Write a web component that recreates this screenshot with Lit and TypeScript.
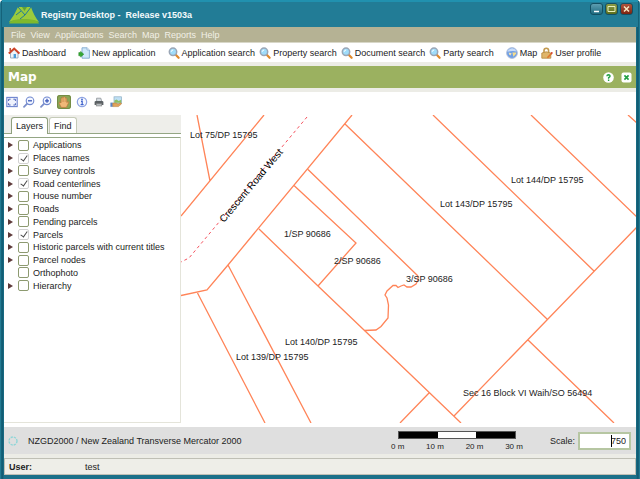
import { LitElement, html, svg, css, TemplateResult } from "lit";
import { customElement, property, state } from "lit/decorators.js";
import { classMap } from "lit/directives/class-map.js";

const magnifier = svg`
  <path d="M7.5 7.5 L10.6 10.8" stroke="#e08a2c" stroke-width="2.2" stroke-linecap="round"/>
  <circle cx="5" cy="4.8" r="3.7" fill="#9fdcfa" stroke="#9aa6b6" stroke-width="1.5"/>
  <path d="M3.2 4.8 A2 2 0 0 1 5.2 3" stroke="#fff" fill="none"/>`;

const icons: Record<string, TemplateResult> = {
  home: svg`
    <path d="M2.5 6 V11 H10 V6 L6.2 2.5 Z" fill="#eef3f8" stroke="#8ba0b8" stroke-width=".8"/>
    <path d="M.8 6.6 L6.2 1.6 L11.4 6.6" fill="none" stroke="#cf4327" stroke-width="2"/>
    <path d="M2.2 1 V4" stroke="#b5442c" stroke-width="1.4"/>
    <rect x="5.6" y="7" width="2.4" height="4" fill="#4a9bd8"/>`,
  create: svg`
    <path d="M4 .8 H9 L11.4 3 V11.2 H4 Z" fill="#cfe8fa" stroke="#7fa8cf" stroke-width=".9"/>
    <path d="M9 .8 V3 H11.4" fill="#fff" stroke="#7fa8cf" stroke-width=".7"/>
    <path d="M.8 5.6 H2.6 V4.4 L5.8 7.2 L2.6 10 V8.8 H.8 Z" fill="#35a835" stroke="#1f8420" stroke-width=".5"/>`,
  search: magnifier,
  globe: svg`
    <circle cx="6" cy="6" r="5.4" fill="#6f9fe6" stroke="#b3bfd8" stroke-width=".9"/>
    <path d="M1.4 5 Q3 .8 6.4 1.2 Q9.4 1.4 10.6 4.4 Q6 3.2 1.4 5Z" fill="#c9dcf8"/>
    <path d="M2.6 5.4 L5.6 6.2 L4.4 8.6 Q2.8 7.6 2.6 5.400Z" fill="#f1e3b4"/>
    <path d="M6.4 5.600 H10.200 Q10.600 7 8.800 8.200 L7.400 9.800Z" fill="#f6dc8a"/>`,
  user: svg`
    <path d="M3 6 V3.6 A2.3 2.3 0 0 1 7.6 3.6 V6" fill="none" stroke="#c39a50" stroke-width="1.6"/>
    <path d="M.8 6 L5.2 4.8 L9.8 6 V11.2 H.8Z" fill="#dfb56a" stroke="#b5883c" stroke-width=".8"/>
    <path d="M6.4 10.8 L10.6 6.4" stroke="#e0742e" stroke-width="1.6"/>
    <circle cx="10.800" cy="6" r=".9" fill="#d33b2a"/>`,
  extent: svg`
    <rect x=".8" y="1.4" width="10.4" height="9.2" fill="#eef2fd" stroke="#6d84cf" stroke-width="1.1"/>
    <path d="M2.6 5 V3.2 H4.6 M7.4 3.2 H9.4 V5 M9.4 7.2 V9 H7.4 M4.6 9 H2.6 V7.2" fill="none" stroke="#5067bd" stroke-width="1"/>`,
  zoomOut: svg`
    <path d="M4.4 7.4 L1 10.8" stroke="#7c8fca" stroke-width="1.8" stroke-linecap="round"/>
    <circle cx="7" cy="4.8" r="3.8" fill="#f2f6ff" stroke="#7088cf" stroke-width="1.1"/>
    <path d="M5 4.8 H9" stroke="#3c58b8" stroke-width="1.3"/>`,
  zoomIn: svg`
    <path d="M4.4 7.4 L1 10.8" stroke="#7c8fca" stroke-width="1.8" stroke-linecap="round"/>
    <circle cx="7" cy="4.8" r="3.8" fill="#f2f6ff" stroke="#7088cf" stroke-width="1.1"/>
    <path d="M5 4.8 H9 M7 2.8 V6.8" stroke="#3c58b8" stroke-width="1.3"/>`,
  hand: svg`
    <path d="M3.2 11.4 L1.2 7.4 Q.8 6 2 6.2 L3 7 V2.4 Q3.5 1.5 4.2 2.4 V1.4 Q5 .5 5.7 1.4 V1.2 Q6.5 .4 7.3 1.4 V2.2 Q8.2 1.6 8.8 2.6 V6.6 L10 5.6 Q11.2 5.6 10.6 6.8 L8.4 11.4Z" fill="#f0b878" stroke="#b9743a" stroke-width=".7"/>
    <path d="M4.2 2.6 V6 M5.7 2 V6 M7.3 2.4 V6" stroke="#c98848" stroke-width=".6"/>`,
  info: svg`
    <circle cx="6" cy="6" r="4.7" fill="#f4f7ff" stroke="#8fa4e2" stroke-width="1.2"/>
    <circle cx="6" cy="3.500" r=".9" fill="#3f62cc"/>
    <path d="M5 5.4 H6.2 V8.4 M4.6 8.6 H7.6" fill="none" stroke="#3f62cc" stroke-width="1.200"/>`,
  print: svg`
    <path d="M3.6 5 V2.2 H7.8 L8.6 5" fill="#d7dde2" stroke="#8a9096" stroke-width=".8"/>
    <path d="M1.6 6 Q1.6 5 3 5 H9 Q10.4 5 10.4 6 V9 H1.6Z" fill="#5a6064"/>
    <rect x="3.2" y="7.6" width="5.6" height="2.400" fill="#b6bcc0" stroke="#777" stroke-width=".5"/>`,
  publish: svg`
    <rect x="4" y=".8" width="7.6" height="6.4" fill="#bfe0f5" stroke="#8fb0c4" stroke-width=".7"/>
    <path d="M4.4 6.8 V4.6 L6.6 3.4 L8.6 5 L11.2 3.8 V6.8Z" fill="#8cc063"/>
    <rect x=".4" y="6.6" width="2.4" height="4.2" fill="#5b84c4"/>
    <path d="M2.8 7 H6 L8 8 L11 6.8 Q12 7.2 11.2 8.2 L8.4 10.6 H2.8Z" fill="#e0a35c" stroke="#b57632" stroke-width=".5"/>`,
};

const glyph = (name: string) =>
  html`<svg class="icon" viewBox="0 0 12 12" aria-hidden="true">${icons[name]}</svg>`;

const menus = ["File", "View", "Applications", "Search", "Map", "Reports", "Help"];

const shortcuts = [
  [["home", "Dashboard"]],
  [["create", "New application"]],
  [["search", "Application search"], ["search", "Property search"], ["search", "Document search"], ["search", "Party search"]],
  [["globe", "Map"], ["user", "User profile"]],
];

const mapTools = [
  ["extent", "Full extent"],
  ["zoomOut", "Zoom out"],
  ["zoomIn", "Zoom in"],
  ["hand", "Pan"],
  ["info", "Information"],
  ["print", "Print"],
  ["publish", "Publish map"],
];

interface Layer { name: string; on?: boolean; leaf?: boolean; }

const layers: Layer[] = [
  { name: "Applications" },
  { name: "Places names", on: true },
  { name: "Survey controls" },
  { name: "Road centerlines", on: true },
  { name: "House number" },
  { name: "Roads" },
  { name: "Pending parcels" },
  { name: "Parcels", on: true },
  { name: "Historic parcels with current titles" },
  { name: "Parcel nodes" },
  { name: "Orthophoto", leaf: true },
  { name: "Hierarchy" },
];

@customElement("parcel-map")
export class ParcelMap extends LitElement {
  static styles = css`
    :host { display: block; position: relative; overflow: hidden; background: #fff; }
    .canvas { position: absolute; inset: 0; width: 100%; height: 100%; }
    .parcel { fill: none; stroke: #ff8458; stroke-width: 1.3; }
    .road { fill: none; stroke: #f5525e; stroke-width: 1; stroke-dasharray: 3 3; }
    .label { font: 9px "Liberation Sans", Arial, sans-serif; fill: #222; }
    .street { font-size: 10px; fill: #000; }
  `;

  render() {
    const labels: [number, number, string][] = [
      [9, 23, "Lot 75/DP 15795"],
      [103, 122, "1/SP 90686"],
      [153, 149, "2/SP 90686"],
      [225, 167, "3/SP 90686"],
      [259, 92, "Lot 143/DP 15795"],
      [330, 68, "Lot 144/DP 15795"],
      [104, 230, "Lot 140/DP 15795"],
      [55, 245, "Lot 139/DP 15795"],
      [282, 281, "Sec 16 Block VI Waih/SO 56494"],
    ];
    return html`
      <svg class="canvas" role="img" aria-label="Parcel map">
        <path class="parcel" d="
          M16 0 L29 66 M83 0 L0 101
          M171 0 L47 150 L26 175 L0 180.500
          M164 9 L366 204
          M127 54.500 L237 161
          M113 70.500 L175 128 L137 171
          M78 114 L137 171 L183 215 L229 259 L280 308
          M47 150 L130 308
          M16.500 178 L84 308
          M252 0 L413 156 M350 0 L456 102 M447 0 L456 8
          M456 112 L273 301 M248 278 L219 308 M347 225 L433 308
          M183 215.500 L195 215 L200 211.500 L207 203 L207.500 190 L206 183 L204 180 L206 176
          L212 170.500 L215 170.500 L217 172.500 L220 171 L223 170 L226 172 L230 172 L235 169 L237 165 L237 161"/>
        <path class="road" d="M126 2 L8 143 L0 147"/>
        ${labels.map(([x, y, t]) => svg`<text class="label" x=${x} y=${y}>${t}</text>`)}
        <text class="label street" transform="translate(43 108) rotate(-50)">Crescent Road West</text>
      </svg>`;
  }
}

@customElement("layer-panel")
export class LayerPanel extends LitElement {
  @property() tab = "Layers";

  static styles = css`
    :host { display: flex; flex-direction: column; background: #fff; }
    button { font: inherit; color: inherit; border: 0; background: none; padding: 0; }
    .tabs { display: flex; gap: 1px; align-items: flex-end; height: 18px; padding-left: 7px; background: #eeeeea; border-bottom: 1px solid #94a684; }
    .tabs .tab { height: 16px; padding: 0 4px; border: 1px solid #c5cbb8; border-bottom: 0; border-radius: 3px 3px 0 0; background: #fff; line-height: 16px; }
    .tabs .active { height: 17px; margin-bottom: -1px; border-color: #8fa07e; }
    .body { flex: 1; margin-top: 3px; padding: 1px 0; border: 1px solid #e4e4da; border-top-color: #94a684; border-left: 0; }
    .tree { display: grid; grid-auto-rows: 1fr; height: 153px; margin: 0; padding: 0 4px; list-style: none; }
    .node { display: flex; align-items: center; white-space: nowrap; }
    .arrow { width: 10px; height: 8px; display: flex; }
    .arrow::before { content: ""; margin: 1px 0 0; border: 3px solid transparent; border-left: 5px solid #5e3a3a; border-right: 0; height: 0; }
    .leaf::before { visibility: hidden; }
    .node label { display: flex; align-items: center; gap: 4px; }
    .box { appearance: none; position: relative; width: 11px; height: 11px; margin: 0; border: 1px solid #8d9a70; border-radius: 2px; background: #fff; }
    .box:checked { border-color: #d2d2d2; }
    .box:checked::before { content: ""; position: absolute; left: 3px; top: 0; width: 4px; height: 7px; border: solid #444; border-width: 0 1px 1px 0; box-sizing: border-box; transform: rotate(35deg); }
  `;

  render() {
    return html`
      <div class="tabs" role="tablist">
        ${["Layers", "Find"].map((t) => html`
          <button role="tab" class=${classMap({ tab: true, active: t === this.tab })}
            aria-selected=${t === this.tab} @click=${() => (this.tab = t)}>${t}</button>`)}
      </div>
      <div class="body">
        <ul class="tree">
          ${layers.map((l) => html`
            <li class="node">
              <button class=${classMap({ arrow: true, leaf: !!l.leaf })} aria-label="Expand ${l.name}"></button>
              <label><input class="box" type="checkbox" .checked=${!!l.on}>${l.name}</label>
            </li>`)}
        </ul>
      </div>`;
  }
}

@customElement("app-root")
export class AppRoot extends LitElement {
  @state() private tool = "hand";

  static styles = css`
    :host { display: block; font: 9px/12px "Liberation Sans", Arial, sans-serif; color: #222; background: #fff; }
    * { box-sizing: border-box; }
    button { font: inherit; color: inherit; border: 0; background: none; padding: 0; white-space: nowrap; }
    .window { display: flex; flex-direction: column; min-height: 100vh; padding: 0 4px 4px; background: linear-gradient(90deg, #2a87a0 0, #0e566d 2px, #1b7089 4px, #1b7089 calc(100% - 4px), #0e566d calc(100% - 2px), #2a87a0 100%); border-radius: 4px 4px 0 0; }
    .icon { width: 12px; height: 12px; flex: none; display: block; }
    .title { display: flex; align-items: center; height: 27px; margin: 0 -2px; padding: 0 5px 0 7px; border-top: 2px solid #2191af; background: #227c96; color: #f4fafc; }
    .logo { width: 30px; height: 18px; margin-right: 2px; }
    .name { flex: 1; margin: 0; font-size: 9px; font-weight: bold; white-space: pre; }
    .controls { display: flex; gap: 2px; align-self: flex-start; padding-top: 1px; }
    .controls button { width: 13px; height: 12px; border: 1px solid #144f62; border-radius: 3px; }
    .controls svg { display: block; width: 11px; height: 10px; }
    .min { background: linear-gradient(#5d9db0, #1e6a80); }
    .max { background: linear-gradient(#8c9c45, #5c6f1c); }
    .close { background: linear-gradient(#b0543c, #7c2410); }
    .menu { display: flex; gap: 5px; height: 16px; padding: 1px 7px 0; background: #b5b294; border-bottom: 1px solid #d8d7c8; color: #f1f0e6; }
    .shortcuts { display: flex; gap: 12px; align-items: center; height: 19px; padding: 1px 4px 0; background: #fff; }
    .group { display: flex; gap: 4px; }
    .shortcuts button { display: flex; gap: 2px; align-items: center; }
    .heading { display: flex; align-items: center; gap: 7px; height: 30px; padding: 0 4px; border: solid #ecece6; border-width: 4px 0; background: #9bb160; color: #fff; }
    .heading h1 { flex: 1; margin: 0; font: bold 12px/16px "DejaVu Sans", Verdana, sans-serif; }
    .heading svg { display: block; width: 11px; height: 11px; }
    .tools { display: flex; gap: 5px; align-items: center; height: 23px; padding: 0 2px 4px; background: #fff; }
    .tools button { padding: 1px 0; border-radius: 3px; }
    .tools .on { padding: 1px; background: #8aa655; box-shadow: inset 0 0 0 1px #748c45; }
    .work { flex: 1; display: grid; grid-template-columns: 177px 1fr; min-height: 308px; }
    .status { display: flex; align-items: center; height: 35px; border: solid #fff; border-top-width: 4px; border-bottom: 4px solid #ecece6; border-left: 0; border-right: 0; padding: 0 5px 0 3px; background: #dfdfdf; }
    .busy { width: 12px; height: 12px; margin-right: 9px; }
    .crs { flex: 1; }
    .ruler { width: 132px; padding-top: 3px; margin-right: 27px; }
    .bar { display: grid; grid-template-columns: repeat(3, 1fr); height: 8px; margin: 0 7px; background: #000; border: 1px solid #555; }
    .bar span:nth-child(2) { background: #fff; }
    .marks { display: flex; justify-content: space-between; padding-top: 2px; font-size: 8px; }
    .scale { display: flex; align-items: center; gap: 3px; }
    .scale input { width: 53px; height: 18px; padding: 0 3px; border: 2px solid #b6c6a2; background: #fff; font: inherit; color: #222; text-align: right; }
    .caret { display: flex; position: relative; }
    .caret::after { content: ""; position: absolute; right: 19px; top: 3px; width: 1px; height: 12px; background: #000; }
    .footer { display: flex; height: 17px; align-items: center; margin: 0; padding: 0 4px; border: 1px solid #bfbfb5; background: #eeeee8; }
    .footer dt { width: 76px; font-weight: bold; }
    .footer dd { margin: 0; }
  `;

  render() {
    return html`
      <div class="window">
        <header class="title">
          <svg class="logo" viewBox="0 0 30 18" aria-hidden="true">
            <path d="M0 16 Q5 10 9 1 H22 Q25 10 30 16 Q22 13 15 13.500 Q7 13 0 16Z" fill="#9bcb3c"/>
            <path d="M0 17.500 Q1 15 5 14 Q15 12 25 14 Q29 15 30 17.500Z" fill="#7fb92c"/>
            <path d="M9 1 L16 9 L22 1 M16 9 L11 13 M12 5 L7 9" stroke="#227c96" stroke-width="1" fill="none"/>
            <path d="M13 1 H18 L15.500 5Z" fill="#5f9f3c"/>
          </svg>
          <p class="name">Registry Desktop -  Release v1503a</p>
          <div class="controls">
            <button class="min" aria-label="Minimize"><svg viewBox="0 0 11 10"><path d="M3 7.500 H8" stroke="#fff" stroke-width="1.500"/></svg></button>
            <button class="max" aria-label="Maximize"><svg viewBox="0 0 11 10"><path d="M2 2.500 H9 V7.500 H2Z" stroke="#e8f0c0" fill="none"/></svg></button>
            <button class="close" aria-label="Close"><svg viewBox="0 0 11 10"><path d="M3 2.500 L8 7.500 M8 2.500 L3 7.500" stroke="#f6e8c4" stroke-width="1.500"/></svg></button>
          </div>
        </header>
        <nav class="menu">${menus.map((m) => html`<button>${m}</button>`)}</nav>
        <div class="shortcuts">
          ${shortcuts.map((g) => html`<div class="group">
            ${g.map(([i, t]) => html`<button>${glyph(i)}${t}</button>`)}</div>`)}
        </div>
        <div class="heading">
          <h1>Map</h1>
          <button aria-label="Help"><svg viewBox="0 0 11 11"><circle cx="5.500" cy="5.500" r="5.300" fill="#fff"/><path d="M3.900 4.200 Q4 2.800 5.500 2.800 Q7.200 2.900 7 4.300 Q6.800 5 5.600 5.700 V6.700 M5.600 7.600 V8.900" stroke="#23a044" stroke-width="1.400" fill="none"/></svg></button>
          <button aria-label="Close map"><svg viewBox="0 0 11 11"><rect x=".5" y=".5" width="10" height="10" rx="2" fill="#fff"/><path d="M3.400 3.400 L7.600 7.600 M7.600 3.400 L3.400 7.600" stroke="#23a044" stroke-width="1.700"/></svg></button>
        </div>
        <div class="tools" role="toolbar" aria-label="Map tools">
          ${mapTools.map(([i, t]) => html`
            <button class=${classMap({ on: this.tool === i })} aria-label=${t}
              @click=${() => (this.tool = i)}>${glyph(i)}</button>`)}
        </div>
        <main class="work">
          <layer-panel></layer-panel>
          <parcel-map></parcel-map>
        </main>
        <div class="status">
          <svg class="busy" viewBox="0 0 12 12" aria-hidden="true"><circle cx="6" cy="6" r="4" fill="none" stroke="#8fd6d8" stroke-width="1.400" stroke-dasharray="2.200 1"/></svg>
          <span class="crs">NZGD2000 / New Zealand Transverse Mercator 2000</span>
          <div class="ruler">
            <div class="bar"><span></span><span></span><span></span></div>
            <div class="marks"><span>0 m</span><span>10 m</span><span>20 m</span><span>30 m</span></div>
          </div>
          <div class="scale">
            <label for="scale">Scale:</label>
            <span class="caret"><input id="scale" type="text" value="750"></span>
          </div>
        </div>
        <dl class="footer"><dt>User:</dt><dd>test</dd></dl>
      </div>`;
  }
}
